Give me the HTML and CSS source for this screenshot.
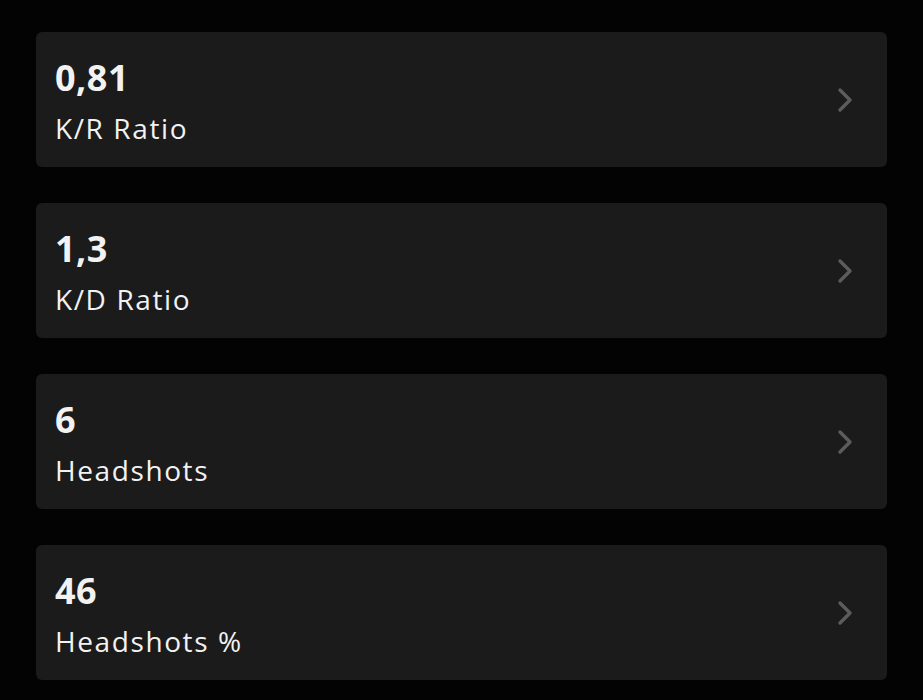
FILE: index.html
```html
<!DOCTYPE html>
<html>
<head>
<meta charset="utf-8">
<link rel="stylesheet" href="styles.css">
</head>
<body>
<div class="list">
  <div class="card">
    <div class="text"><div class="value">0,81</div><div class="label">K/R Ratio</div></div>
    <svg class="chev" viewBox="0 0 18 26" width="18" height="26"><path d="M4 3 L14 13 L4 23" fill="none" stroke="#5c5c5c" stroke-width="3.4" stroke-linecap="round" stroke-linejoin="round"/></svg>
  </div>
  <div class="card">
    <div class="text"><div class="value">1,3</div><div class="label">K/D Ratio</div></div>
    <svg class="chev" viewBox="0 0 18 26" width="18" height="26"><path d="M4 3 L14 13 L4 23" fill="none" stroke="#5c5c5c" stroke-width="3.4" stroke-linecap="round" stroke-linejoin="round"/></svg>
  </div>
  <div class="card">
    <div class="text"><div class="value">6</div><div class="label">Headshots</div></div>
    <svg class="chev" viewBox="0 0 18 26" width="18" height="26"><path d="M4 3 L14 13 L4 23" fill="none" stroke="#5c5c5c" stroke-width="3.4" stroke-linecap="round" stroke-linejoin="round"/></svg>
  </div>
  <div class="card">
    <div class="text"><div class="value">46</div><div class="label">Headshots %</div></div>
    <svg class="chev" viewBox="0 0 18 26" width="18" height="26"><path d="M4 3 L14 13 L4 23" fill="none" stroke="#5c5c5c" stroke-width="3.4" stroke-linecap="round" stroke-linejoin="round"/></svg>
  </div>
</div>
</body>
</html>
```
FILE: styles.css
```css
html, body {
  margin: 0;
  background: #030303;
}
body {
  font-family: "Open Sans", "Liberation Sans", sans-serif;
  color: #f2f2f2;
}
.list {
  padding: 32px 36px;
  display: flex;
  flex-direction: column;
  gap: 36px;
}
.card {
  height: 135px;
  box-sizing: border-box;
  background: #1b1b1b;
  border-radius: 6px;
  display: flex;
  align-items: center;
  justify-content: space-between;
  padding: 0 33px 0 19px;
}
.text {
  display: flex;
  flex-direction: column;
  padding-top: 5px;
}
.value {
  font-size: 36px;
  font-weight: 700;
  line-height: 42px;
  letter-spacing: 0.5px;
}
.label {
  font-size: 28px;
  line-height: 40px;
  font-weight: 400;
  letter-spacing: 1.6px;
  margin-top: 9px;
}
.chev {
  display: block;
}
```
